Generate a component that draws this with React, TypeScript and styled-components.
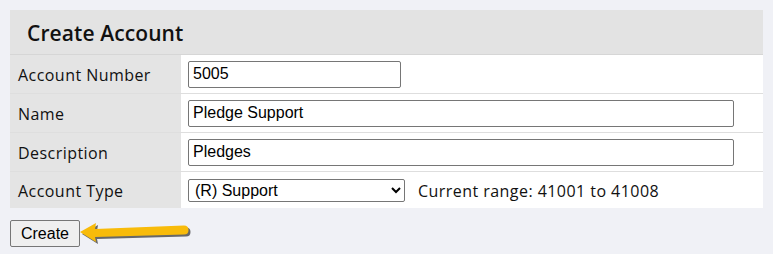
import styled, { createGlobalStyle } from 'styled-components';

const GlobalStyle = createGlobalStyle`
  html, body {
    margin: 0;
    padding: 0;
    background: #f0f1f6;
  }
  body {
    font-family: "Open Sans", "Noto Sans", sans-serif;
    color: #111;
  }
`;

const Page = styled.div`
  position: relative;
  width: 773px;
  height: 254px;
  padding: 10px;
  box-sizing: border-box;
`;

const Panel = styled.div`
  width: 753px;
  background: #fff;
`;

const Header = styled.div`
  height: 45px;
  display: flex;
  align-items: center;
  padding-left: 17px;
  padding-top: 1px;
  box-sizing: border-box;
  background: #e3e3e3;
  border-bottom: 1px solid #d6d6d6;
  font-size: 21px;
  font-weight: 600;
  letter-spacing: 0.1px;
`;

const Row = styled.div<{ $last?: boolean }>`
  display: grid;
  grid-template-columns: 171px 1fr;
  height: ${p => (p.$last ? 36 : 38)}px;
  border-bottom: ${p => (p.$last ? 'none' : '1px solid #dedede')};
`;

const Label = styled.div`
  display: flex;
  align-items: center;
  padding: 1px 0 0 8px;
  background: #e4e4e4;
  font-size: 16px;
  letter-spacing: 0.45px;
`;

const Value = styled.div`
  display: flex;
  align-items: center;
  gap: 13px;
  padding-left: 7px;
  background: #fff;
`;

const TextInput = styled.input<{ $width: number }>`
  box-sizing: border-box;
  width: ${p => p.$width}px;
  height: 27px;
  padding: 0 4px;
  border: 1px solid #767676;
  border-radius: 2px;
  font-family: "Liberation Sans", Arial, sans-serif;
  font-size: 16px;
  color: #000;
  background: #fff;
`;

const Select = styled.select`
  box-sizing: border-box;
  width: 217px;
  height: 23px;
  padding: 0 2px;
  border: 1px solid #767676;
  border-radius: 2px;
  font-family: "Liberation Sans", Arial, sans-serif;
  font-size: 16px;
  color: #000;
  background: #fff;
`;

const Note = styled.span`
  padding-top: 1px;
  font-size: 16px;
  letter-spacing: 0.45px;
`;

const Actions = styled.div`
  padding-top: 12px;
`;

const Button = styled.button`
  box-sizing: border-box;
  height: 27px;
  width: 70px;
  padding: 0;
  border: 1px solid #767676;
  border-radius: 2px;
  background: #efefef;
  font-family: "Liberation Sans", Arial, sans-serif;
  font-size: 16px;
  color: #000;
`;

const Arrow = styled.svg`
  position: absolute;
  left: 78px;
  top: 220px;
`;

export default function App() {
  return (
    <>
      <GlobalStyle />
      <Page>
        <Panel>
          <Header>Create Account</Header>
          <Row>
            <Label>Account Number</Label>
            <Value>
              <TextInput $width={213} defaultValue="5005" />
            </Value>
          </Row>
          <Row>
            <Label>Name</Label>
            <Value>
              <TextInput $width={546} defaultValue="Pledge Support" />
            </Value>
          </Row>
          <Row>
            <Label>Description</Label>
            <Value>
              <TextInput $width={546} defaultValue="Pledges" />
            </Value>
          </Row>
          <Row $last>
            <Label>Account Type</Label>
            <Value>
              <Select defaultValue="R">
                <option value="R">(R) Support</option>
              </Select>
              <Note>Current range: 41001 to 41008</Note>
            </Value>
          </Row>
        </Panel>
        <Actions>
          <Button>Create</Button>
        </Actions>
        <Arrow width="116" height="28" viewBox="0 0 116 28">
          <g transform="translate(2,2)" fill="#3a3a3a" opacity="0.75">
            <path d="M2 12 L18 3 L17 9 L106 5.5 Q110.5 5.5 110.5 10 Q110.5 14.5 106 14.5 L17 17 L18 22 Z" />
          </g>
          <path
            d="M2 12 L18 3 L17 9 L106 5.5 Q110.5 5.5 110.5 10 Q110.5 14.5 106 14.5 L17 17 L18 22 Z"
            fill="#f8bb0a"
          />
        </Arrow>
      </Page>
    </>
  );
}
